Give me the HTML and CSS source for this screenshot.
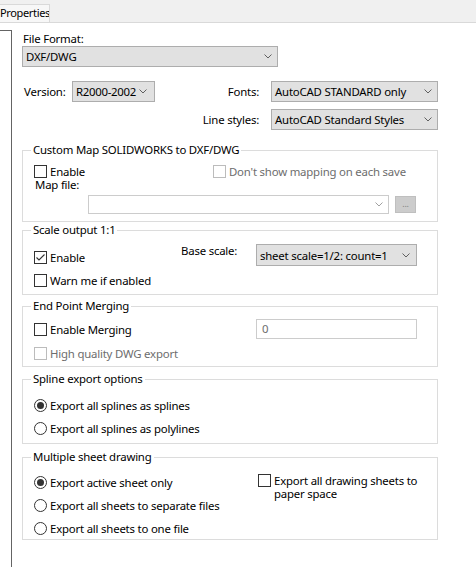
FILE: index.html
```html
<!DOCTYPE html>
<html>
<head>
<meta charset="utf-8">
<title>Properties</title>
<link rel="stylesheet" href="styles.css">
</head>
<body>
<div class="tabstrip"><div class="tab"><span>Properties</span></div></div>
<div class="page">
  <div class="side"></div>
  <div class="main">
    <div class="ff-label">File Format:</div>
    <div class="combo combo-ff"><span>DXF/DWG</span><svg class="chev" width="8" height="5" viewBox="0 0 8 5"><polyline points="0.5,0.5 4,4 7.5,0.5"/></svg></div>

    <div class="top-grid">
      <div class="lbl lbl-version">Version:</div>
      <div class="combo combo-ver"><span>R2000-2002</span><svg class="chev" width="8" height="5" viewBox="0 0 8 5"><polyline points="0.5,0.5 4,4 7.5,0.5"/></svg></div>
      <div class="lbl lbl-right">Fonts:</div>
      <div class="combo"><span>AutoCAD STANDARD only</span><svg class="chev" width="8" height="5" viewBox="0 0 8 5"><polyline points="0.5,0.5 4,4 7.5,0.5"/></svg></div>
      <div class="lbl lbl-right r2">Line styles:</div>
      <div class="combo r2c"><span>AutoCAD Standard Styles</span><svg class="chev" width="8" height="5" viewBox="0 0 8 5"><polyline points="0.5,0.5 4,4 7.5,0.5"/></svg></div>
    </div>

    <fieldset class="group g-map">
      <legend>Custom Map SOLIDWORKS to DXF/DWG</legend>
      <div class="map-row1">
        <div class="opt"><span class="cb"></span><span>Enable</span></div>
        <div class="opt disabled"><span class="cb"></span><span>Don't show mapping on each save</span></div>
      </div>
      <div class="map-label">Map file:</div>
      <div class="map-row">
        <div class="combo combo-map"><span></span><svg class="chev" width="8" height="5" viewBox="0 0 8 5"><polyline points="0.5,0.5 4,4 7.5,0.5"/></svg></div>
        <div class="browse">...</div>
      </div>
    </fieldset>

    <fieldset class="group g-scale">
      <legend>Scale output 1:1</legend>
      <div class="scale-grid">
        <div class="opt opt-enable"><span class="cb checked"><svg width="11" height="11" viewBox="0 0 11 11"><polyline points="1.5,5.5 4,8 9.5,2.5"/></svg></span><span>Enable</span></div>
        <div class="lbl lbl-base">Base scale:</div>
        <div class="combo combo-scale"><span>sheet scale=1/2: count=1</span><svg class="chev" width="8" height="5" viewBox="0 0 8 5"><polyline points="0.5,0.5 4,4 7.5,0.5"/></svg></div>
        <div class="opt opt-warn"><span class="cb"></span><span>Warn me if enabled</span></div>
      </div>
    </fieldset>

    <fieldset class="group g-merge">
      <legend>End Point Merging</legend>
      <div class="merge-row">
        <div class="opt"><span class="cb"></span><span>Enable Merging</span></div>
        <div class="textbox">0</div>
      </div>
      <div class="opt disabled merge-hq"><span class="cb"></span><span>High quality DWG export</span></div>
    </fieldset>

    <fieldset class="group g-spline">
      <legend>Spline export options</legend>
      <div class="opt"><span class="rb on"></span><span>Export all splines as splines</span></div>
      <div class="opt"><span class="rb"></span><span>Export all splines as polylines</span></div>
    </fieldset>

    <fieldset class="group g-sheet">
      <legend>Multiple sheet drawing</legend>
      <div class="sheet-grid">
        <div class="opt"><span class="rb on"></span><span>Export active sheet only</span></div>
        <div class="opt"><span class="rb"></span><span>Export all sheets to separate files</span></div>
        <div class="opt"><span class="rb"></span><span>Export all sheets to one file</span></div>
        <div class="opt opt-paper"><span class="cb"></span><span class="paper-text"><span class="pl">Export all drawing sheets to</span><span class="pl">paper space</span></span></div>
      </div>
    </fieldset>
  </div>
</div>
</body>
</html>
```
FILE: styles.css
```css
html, body {
  margin: 0;
  padding: 0;
  background: #ffffff;
}
body {
  width: 476px;
  height: 571px;
  overflow: hidden;
  font-family: "Noto Sans", "Open Sans", sans-serif;
  font-size: 11.4px;
  letter-spacing: -0.2px;
  color: #000000;
}
.tabstrip {
  height: 18px;
  padding-top: 4px;
  background: #f0f0f0;
  border-bottom: 1px solid #d9d9d9;
}
.tab {
  width: 50px;
  height: 18px;
  box-sizing: border-box;
  border-top: 1px solid #d9d9d9;
  border-right: 1px solid #d9d9d9;
  background: #f7f7f7;
  display: flex;
  justify-content: flex-start;
  overflow: hidden;
  white-space: nowrap;
  padding-left: 0;
  line-height: 16px;
  font-size: 11px;
  letter-spacing: -0.35px;
}
.page {
  display: flex;
  align-items: flex-start;
}
.side {
  width: 11px;
  height: 536px;
  margin-top: 7px;
  border-top: 1px solid #646464;
  border-right: 1px solid #646464;
  flex: none;
}
.main {
  margin-left: 10px;
  width: 416px;
  flex: none;
}
.ff-label {
  padding-top: 8px;
  line-height: 15px;
  padding-left: 1px;
}
.combo {
  box-sizing: border-box;
  height: 21px;
  border: 1px solid #adadad;
  background: #e1e1e1;
  display: flex;
  align-items: center;
  justify-content: space-between;
  padding: 0 5px 0 3px;
  white-space: nowrap;
}
.chev {
  flex: none;
}
.chev polyline {
  fill: none;
  stroke: #606060;
  stroke-width: 1;
}
.combo-ff {
  width: 256px;
}
.top-grid {
  margin-top: 14px;
  display: grid;
  grid-template-columns: 50px 83px 116px 167px;
  grid-auto-rows: 21px;
  row-gap: 7px;
}
.lbl {
  line-height: 13px;
  white-space: nowrap;
}
.top-grid .lbl {
  align-self: center;
}
.lbl-version {
  padding-left: 2px;
}
.combo-ver {
  padding-right: 7px;
  letter-spacing: -0.3px;
}
.lbl-right {
  text-align: right;
  padding-right: 12px;
}
.r2 {
  grid-column: 3;
  grid-row: 2;
}
.r2c {
  grid-column: 4;
  grid-row: 2;
}

.group {
  margin: 0;
  padding: 0;
  border: 1px solid #dcdcdc;
  min-width: 0;
  box-sizing: border-box;
  width: 416px;
}
.group > legend {
  margin-left: -3px;
  padding: 0 2px;
  line-height: 14px;
}

.opt {
  display: flex;
  align-items: center;
  line-height: 13px;
  height: 13px;
  white-space: nowrap;
}
.cb {
  flex: none;
  box-sizing: border-box;
  width: 13px;
  height: 13px;
  border: 1px solid #333333;
  background: #ffffff;
  margin-right: 3px;
  display: flex;
  align-items: center;
  justify-content: center;
}
.cb svg polyline {
  fill: none;
  stroke: #333333;
  stroke-width: 1.1;
}
.rb {
  flex: none;
  box-sizing: border-box;
  width: 13px;
  height: 13px;
  border: 1px solid #333333;
  border-radius: 50%;
  background: #ffffff;
  margin-right: 3px;
  display: flex;
  align-items: center;
  justify-content: center;
}
.rb.on::after {
  content: "";
  width: 7px;
  height: 7px;
  border-radius: 50%;
  background: #333333;
}
.disabled {
  color: #6d6d6d;
}
.disabled .cb {
  border-color: #bcbcbc;
}

/* Custom map */
.g-map {
  margin-top: 13px;
  padding: 8px 0 7px 11px;
}
.map-row1 {
  display: grid;
  grid-template-columns: 179px auto;
}
.map-label {
  line-height: 12px;
  height: 12px;
  margin-top: 1px;
  padding-left: 1px;
}
.map-row {
  margin-top: 4px;
  margin-left: 54px;
  display: flex;
  align-items: center;
}
.combo-map {
  width: 301px;
  height: 19px;
  background: #ffffff;
  border-color: #cccccc;
}
.combo-map .chev polyline {
  stroke: #a0a0a0;
}
.browse {
  margin-left: 6px;
  box-sizing: border-box;
  width: 21px;
  height: 17px;
  background: #cccccc;
  border: 1px solid #bfbfbf;
  color: #838383;
  font-size: 9px;
  line-height: 14px;
  text-align: center;
}

/* Scale */
.g-scale {
  margin-top: 1px;
  padding: 7px 0 7px 11px;
}
.scale-grid {
  display: grid;
  grid-template-columns: 147px 75px 161px;
  grid-template-rows: 22px auto;
}
.opt-enable {
  margin-top: 7px;
  align-self: start;
}
.lbl-base {
  align-self: start;
}
.combo-scale {
  height: 22px;
  padding-right: 6px;
}
.opt-warn {
  grid-column: 1 / 3;
  margin-top: 8px;
}

/* Merge */
.g-merge {
  margin-top: 4px;
  padding: 6px 0 6px 11px;
}
.merge-row {
  display: grid;
  grid-template-columns: 222px 161px;
  align-items: center;
}
.textbox {
  box-sizing: border-box;
  height: 20px;
  border: 1px solid #cccccc;
  background: #ffffff;
  color: #6d6d6d;
  line-height: 18px;
  padding-left: 5px;
}
.merge-hq {
  margin-top: 8px;
}

/* Spline */
.g-spline {
  margin-top: 5px;
  padding: 13px 0 8px 11px;
}
.g-spline .opt + .opt {
  margin-top: 10px;
}

/* Sheets */
.g-sheet {
  margin-top: 6px;
  padding: 12px 0 4px 11px;
}
.sheet-grid {
  display: grid;
  grid-template-columns: 224px auto;
  grid-auto-rows: 13px;
  row-gap: 10px;
}
.sheet-grid .opt {
  grid-column: 1;
}
.sheet-grid .opt-paper {
  grid-column: 2;
  grid-row: 1 / 3;
  margin-top: -2px;
  height: auto;
  align-items: flex-start;
}
.paper-text {
  display: flex;
  flex-direction: column;
}
.pl {
  line-height: 13.3px;
}
```
